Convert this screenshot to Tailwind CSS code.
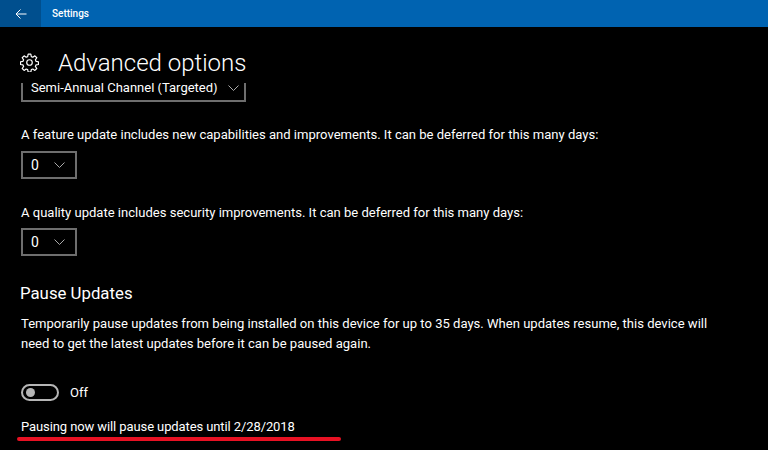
<!DOCTYPE html>
<html lang="en">
<head>
    <meta charset="UTF-8">
    <title>Settings</title>
    <script src="https://cdn.jsdelivr.net/npm/@tailwindcss/browser@4"></script>
</head>
<body class="bg-black text-white overflow-hidden font-['Roboto',sans-serif]">
    <div class="w-[768px] h-[450px] flex flex-col relative overflow-hidden">
        <!-- title bar -->
        <div class="h-[27px] bg-[#0063b1] flex items-center shrink-0">
            <div class="w-[41px] h-[27px] bg-[#004f8e] flex items-center justify-center">
                <svg width="12" height="12" viewBox="0 0 12 12" fill="none" stroke="#fff" stroke-width="1"><path d="M11.5 6H1M5.5 1.5L1 6l4.5 4.5"/></svg>
            </div>
            <span class="ml-[11px] text-[10px] font-medium leading-none">Settings</span>
        </div>
        <!-- page heading -->
        <div class="h-[56px] shrink-0 flex items-center pl-[20px] pt-[15px]">
            <svg width="19" height="19" viewBox="0 0 24 24" fill="none" stroke="#fff" stroke-width="1.5" stroke-linejoin="round"><circle cx="12" cy="12" r="3.5"/><path d="M10.3 1.5h3.4l.6 3.1 1.9.8 2.6-1.8 2.4 2.4-1.8 2.6.8 1.9 3.1.6v3.4l-3.1.6-.8 1.9 1.8 2.6-2.4 2.4-2.6-1.8-1.9.8-.6 3.1h-3.4l-.6-3.1-1.9-.8-2.6 1.8-2.4-2.4 1.8-2.6-.8-1.9-3.1-.6v-3.4l3.1-.6.8-1.9-1.8-2.6 2.4-2.4 2.6 1.8 1.9-.8z"/></svg>
            <h1 class="ml-[19px] text-[24px] font-light leading-none">Advanced options</h1>
        </div>
        <!-- scrolled content -->
        <div class="flex-1 overflow-hidden pl-[21px]">
            <div class="-mt-[8px] w-[225px] h-[27px] border-2 border-[#6e6e6e] flex items-center pl-[8px] pb-[2px] text-[13px]">
                <span class="leading-none whitespace-nowrap">Semi-Annual Channel (Targeted)</span>
                <svg class="ml-[10px] shrink-0" width="11" height="6" viewBox="0 0 11 6" fill="none" stroke="#aaa" stroke-width="1"><path d="M.5.5l5 5 5-5"/></svg>
            </div>
            <p class="mt-[24px] text-[13.05px] leading-[18px]">A feature update includes new capabilities and improvements. It can be deferred for this many days:</p>
            <div class="mt-[7px] w-[56px] h-[28px] border-2 border-[#6e6e6e] flex items-center pl-[8px] text-[14px]">
                <span class="leading-none">0</span>
                <svg class="ml-[15px]" width="11" height="6" viewBox="0 0 11 6" fill="none" stroke="#aaa" stroke-width="1"><path d="M.5.5l5 5 5-5"/></svg>
            </div>
            <p class="mt-[25px] text-[13.05px] leading-[18px]">A quality update includes security improvements. It can be deferred for this many days:</p>
            <div class="mt-[6px] w-[56px] h-[28px] border-2 border-[#6e6e6e] flex items-center pl-[8px] text-[14px]">
                <span class="leading-none">0</span>
                <svg class="ml-[15px]" width="11" height="6" viewBox="0 0 11 6" fill="none" stroke="#aaa" stroke-width="1"><path d="M.5.5l5 5 5-5"/></svg>
            </div>
            <h2 class="mt-[25px] -ml-[1px] text-[16.8px] leading-[24px]">Pause Updates</h2>
            <p class="mt-[9px] text-[13.05px] leading-[20px] w-[700px]">Temporarily pause updates from being installed on this device for up to 35 days. When updates resume, this device will need to get the latest updates before it can be paused again.</p>
            <div class="mt-[28px] flex items-center h-[20px]">
                <div class="w-[38px] h-[17px] rounded-full border-2 border-[#b5b5b5] flex items-center pl-[3px]">
                    <div class="w-[9px] h-[9px] rounded-full bg-[#b5b5b5]"></div>
                </div>
                <span class="ml-[11px] text-[13px] leading-none">Off</span>
            </div>
            <p class="mt-[16px] text-[13px] leading-[18px] tracking-[-0.1px]">Pausing now will pause updates until 2/28/2018</p>
        </div>
        <!-- red annotation underline -->
        <div class="absolute left-[17px] top-[437px] w-[324px] h-[4px] rounded-full bg-[#e81123]"></div>
    </div>
</body>
</html>
